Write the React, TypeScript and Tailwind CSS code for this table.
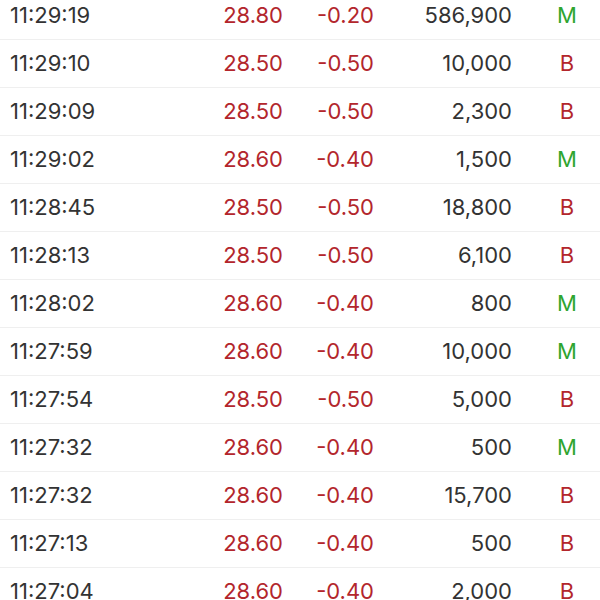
const trades: [string, string, string, string, 'M' | 'B'][] = [
  ['11:29:19', '28.80', '-0.20', '586,900', 'M'],
  ['11:29:10', '28.50', '-0.50', '10,000', 'B'],
  ['11:29:09', '28.50', '-0.50', '2,300', 'B'],
  ['11:29:02', '28.60', '-0.40', '1,500', 'M'],
  ['11:28:45', '28.50', '-0.50', '18,800', 'B'],
  ['11:28:13', '28.50', '-0.50', '6,100', 'B'],
  ['11:28:02', '28.60', '-0.40', '800', 'M'],
  ['11:27:59', '28.60', '-0.40', '10,000', 'M'],
  ['11:27:54', '28.50', '-0.50', '5,000', 'B'],
  ['11:27:32', '28.60', '-0.40', '500', 'M'],
  ['11:27:32', '28.60', '-0.40', '15,700', 'B'],
  ['11:27:13', '28.60', '-0.40', '500', 'B'],
  ['11:27:04', '28.60', '-0.40', '2,000', 'B'],
];

export default function App() {
  return (
    <div className="h-[600px] w-[600px] overflow-hidden bg-white font-['Inter',sans-serif] text-[22px]">
      <div className="-mt-[8px]">
        {trades.map(([time, price, change, vol, side], i) => (
          <div key={i} className="flex h-[48px] items-center border-b border-[#efefef]">
            <div className="w-[200px] pl-[10px] text-[#333333]">{time}</div>
            <div className="w-[83px] text-right text-[#b3262c]">{price}</div>
            <div className="w-[91px] text-right text-[#b3262c]">{change}</div>
            <div className="w-[138px] text-right text-[#333333]">{vol}</div>
            <div
              className={
                'ml-[40px] w-[30px] text-center ' +
                (side === 'M' ? 'text-[#2fa52f]' : 'text-[#b3262c]')
              }
            >
              {side}
            </div>
          </div>
        ))}
      </div>
    </div>
  );
}
